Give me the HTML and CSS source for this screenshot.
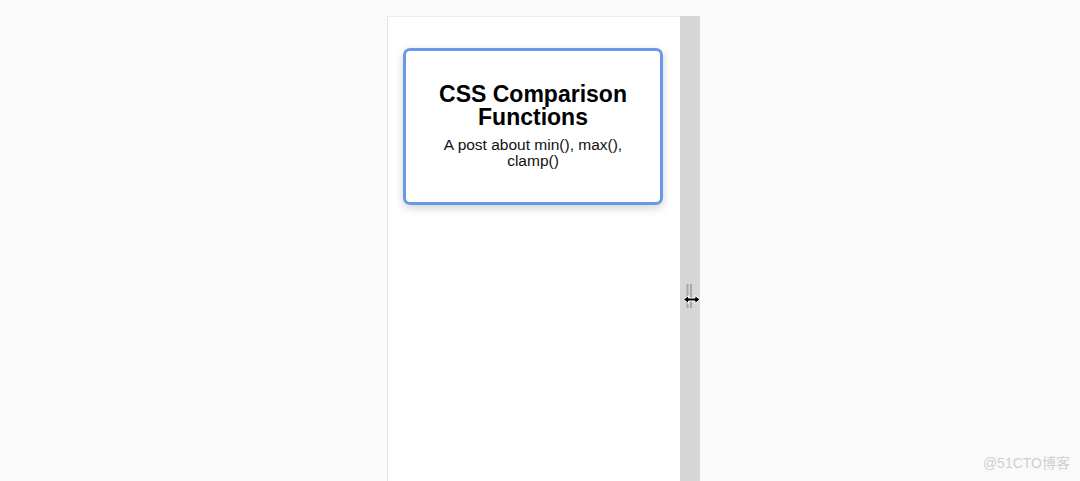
FILE: index.html
```html
<!DOCTYPE html>
<html>
<head>
<meta charset="utf-8">
<link rel="stylesheet" href="styles.css">
</head>
<body>
<div class="stage">
  <div class="frame">
    <div class="panel">
      <div class="card">
        <h1 class="title">CSS Comparison Functions</h1>
        <p class="sub">A post about min(), max(), clamp()</p>
      </div>
    </div>
    <div class="gutter">
      <svg class="handle" width="22" height="30" viewBox="0 0 22 30">
        <rect x="6.5" y="0" width="2" height="24" fill="#a8a8a8"/>
        <rect x="10" y="0" width="2" height="24" fill="#a8a8a8"/>
        <path d="M3.5 15.5 L8.5 11.5 L8.5 14 L15 14 L15 11.5 L20 15.5 L15 19.5 L15 17 L8.5 17 L8.5 19.5 Z" fill="#000" stroke="#fff" stroke-width="1" stroke-linejoin="round"/>
      </svg>
    </div>
  </div>
</div>
<div class="watermark">@51CTO博客</div>
</body>
</html>
```

FILE: styles.css
```css
html, body {
  margin: 0;
  padding: 0;
  height: 100%;
  overflow: hidden;
}
body {
  background: #fafafa;
  font-family: "Liberation Sans", Arial, sans-serif;
}
.stage {
  padding: 16px 0 0 387px;
  height: 100%;
  box-sizing: border-box;
}
.frame {
  display: flex;
  height: 100%;
}
.panel {
  width: 293px;
  background: #fff;
  border-left: 1px solid #e6e6e6;
  border-top: 1px solid #ececec;
  padding: 31px 17px 0 15px;
  box-sizing: border-box;
}
.card {
  border: 3px solid #6a98e8;
  border-radius: 7px;
  box-shadow: 0 3px 10px rgba(0,0,0,0.18);
  padding: 32px 18px 33px;
  box-sizing: border-box;
  width: 260px;
  text-align: center;
  color: #000;
}
.title {
  margin: 0;
  font-size: 23px;
  line-height: 23px;
  font-weight: bold;
}
.sub {
  margin: 8px 0 0;
  font-size: 15.5px;
  line-height: 16px;
  color: #111;
}
.gutter {
  width: 20px;
  background: #d6d6d6;
  padding-top: 268px;
  box-sizing: border-box;
  overflow: visible;
}
.handle {
  display: block;
  overflow: visible;
}
.watermark {
  position: absolute;
  right: 10px;
  bottom: 9px;
  font-size: 14px;
  color: #cfcfcf;
  font-family: "Liberation Sans", "Noto Sans CJK SC", sans-serif;
}
```
